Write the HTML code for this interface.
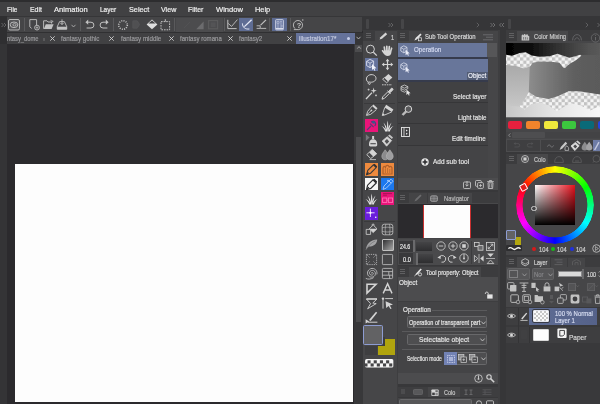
<!DOCTYPE html>
<html><head><meta charset="utf-8"><title>CSP</title><style>
html,body{margin:0;padding:0;background:#2b2a2d;}
body{width:600px;height:404px;overflow:hidden;position:relative;font-family:"Liberation Sans",sans-serif;}
#r{position:absolute;left:-4px;top:-4px;width:608px;height:412px;overflow:hidden;background:#2b2a2d;filter:blur(0.4px);}
#c{position:absolute;left:4px;top:4px;width:600px;height:404px;}
#c div,#c svg,#c span{position:absolute;display:block;}
#c span{white-space:nowrap;transform-origin:0 0;line-height:normal;-webkit-text-stroke:0.2px;}
svg{overflow:visible}
</style></head><body><div id="r"><div id="c">
<div style="left:-4px;top:-4px;width:608px;height:412px;background:#2b2a2d;"></div>
<div style="left:-4px;top:-4px;width:608px;height:6px;background:#2d2d2f;"></div>
<div style="left:-4px;top:2px;width:608px;height:14px;background:#414143;"></div>
<div style="left:-4px;top:16px;width:608px;height:15px;background:#363638;"></div>
<div style="left:-4px;top:16px;width:11px;height:392px;background:#343436;"></div>
<div style="left:-4px;top:16px;width:11px;height:28px;background:#2f2f31;"></div>
<div style="left:7px;top:16.5px;width:355px;height:15.5px;background:#454547;"></div>
<div style="left:7px;top:32px;width:355px;height:1px;background:#303032;"></div>
<div style="left:7px;top:33px;width:355px;height:11px;background:#414143;"></div>
<span style="left:7px;top:4.76px;font-size:8px;color:#f0f0f0;transform:scaleX(0.8077);">File</span>
<span style="left:30px;top:4.76px;font-size:8px;color:#f0f0f0;transform:scaleX(0.8571);">Edit</span>
<span style="left:54px;top:4.76px;font-size:8px;color:#f0f0f0;transform:scaleX(0.9444);">Animation</span>
<span style="left:99.75px;top:4.76px;font-size:8px;color:#f0f0f0;transform:scaleX(0.8125);">Layer</span>
<span style="left:129px;top:4.76px;font-size:8px;color:#f0f0f0;transform:scaleX(0.9091);">Select</span>
<span style="left:160.5px;top:4.76px;font-size:8px;color:#f0f0f0;transform:scaleX(0.8882);">View</span>
<span style="left:188px;top:4.76px;font-size:8px;color:#f0f0f0;transform:scaleX(0.8611);">Filter</span>
<span style="left:216px;top:4.76px;font-size:8px;color:#f0f0f0;transform:scaleX(0.9464);">Window</span>
<span style="left:255px;top:4.76px;font-size:8px;color:#f0f0f0;transform:scaleX(0.9219);">Help</span>
<span style="left:7px;top:33.71px;font-size:7.5px;color:#9a9a9d;transform:scaleX(0.7732);">ntasy_dome</span>
<span style="left:61.2px;top:33.71px;font-size:7.5px;color:#9a9a9d;transform:scaleX(0.8304);">fantasy gothic</span>
<span style="left:120.6px;top:33.71px;font-size:7.5px;color:#9a9a9d;transform:scaleX(0.8333);">fantasy middle</span>
<span style="left:180px;top:33.71px;font-size:7.5px;color:#9a9a9d;transform:scaleX(0.8077);">fantasy romana</span>
<span style="left:239px;top:33.71px;font-size:7.5px;color:#9a9a9d;transform:scaleX(0.8214);">fantasy2</span>
<svg style="left:50.0px;top:35.8px;" width="5" height="5" viewBox="0 0 5 5"><path d="M0.3 0.3L4.7 4.7M4.7 0.3L0.3 4.7" stroke="#cfcfcf" stroke-width="0.9" fill="none"/></svg>
<svg style="left:109.0px;top:35.8px;" width="5" height="5" viewBox="0 0 5 5"><path d="M0.3 0.3L4.7 4.7M4.7 0.3L0.3 4.7" stroke="#cfcfcf" stroke-width="0.9" fill="none"/></svg>
<svg style="left:168.5px;top:35.8px;" width="5" height="5" viewBox="0 0 5 5"><path d="M0.3 0.3L4.7 4.7M4.7 0.3L0.3 4.7" stroke="#cfcfcf" stroke-width="0.9" fill="none"/></svg>
<svg style="left:227.8px;top:35.8px;" width="5" height="5" viewBox="0 0 5 5"><path d="M0.3 0.3L4.7 4.7M4.7 0.3L0.3 4.7" stroke="#cfcfcf" stroke-width="0.9" fill="none"/></svg>
<svg style="left:287.3px;top:35.8px;" width="5" height="5" viewBox="0 0 5 5"><path d="M0.3 0.3L4.7 4.7M4.7 0.3L0.3 4.7" stroke="#cfcfcf" stroke-width="0.9" fill="none"/></svg>
<div style="left:42.5px;top:38px;width:2px;height:2.5px;background:#5a5a5c;"></div>
<div style="left:296px;top:33px;width:59px;height:11px;background:#65729a;"></div>
<span style="left:298.8px;top:33.98px;font-size:7.2px;color:#c4cadf;transform:scaleX(0.8651);">illustration17*</span>
<div style="left:347.3px;top:37.2px;width:3px;height:3px;background:#c9d0ea;border-radius:2px"></div>
<div style="left:355px;top:33px;width:7.5px;height:11px;background:#363638;"></div>
<svg style="left:356px;top:36px;" width="5" height="4" viewBox="0 0 5 4"><path d="M0.5 0.8L2.5 3L4.5 0.8" stroke="#c8c8c8" stroke-width="0.8" fill="none"/></svg>
<div style="left:14.5px;top:164.4px;width:338.6px;height:237.9px;background:#fdfdfd;"></div>
<div style="left:354px;top:44px;width:8.5px;height:364px;background:#38383a;"></div>
<div style="left:355px;top:44.5px;width:7px;height:7px;background:#4c4c4e;"></div>
<div style="left:355.7px;top:136.5px;width:5.6px;height:185px;background:#4c4c4e;"></div>
<svg style="left:356.5px;top:46px;" width="4" height="3" viewBox="0 0 4 3"><path d="M0.3 2.6L2 0.6L3.7 2.6" stroke="#bdbdbd" stroke-width="0.8" fill="none"/></svg>
<div style="left:362.5px;top:30.3px;width:34px;height:377.7px;background:#464648;"></div>
<div style="left:362.5px;top:30.3px;width:34px;height:11.2px;background:#3c3c3e;"></div>
<div style="left:374.5px;top:30.8px;width:22px;height:10.7px;background:#464648;"></div>
<div style="left:396.5px;top:30.3px;width:1.5px;height:377.7px;background:#3e3e40;"></div>
<div style="left:398px;top:30.3px;width:99.5px;height:377.7px;background:#444446;"></div>
<div style="left:497.5px;top:30.3px;width:8.5px;height:377.7px;background:#363638;"></div>
<div style="left:497.5px;top:30.3px;width:2.5px;height:377.7px;background:#3e3e40;"></div>
<div style="left:506px;top:30.3px;width:98px;height:377.7px;background:#464648;"></div>
<svg style="left:0.5px;top:21.5px;" width="6" height="6" viewBox="0 0 6 6"><path d="M0.5 1L2.5 3L0.5 5M3 1L5 3L3 5" stroke="#6e6e70" stroke-width="0.8" fill="none"/></svg>
<svg style="left:8px;top:18.5px;" width="12" height="11.5" viewBox="0 0 12 11.5"><rect x="0.5" y="0.5" width="11" height="10.5" rx="1.5" fill="#565658" stroke="#c2c2c2" stroke-width="0.9"/><ellipse cx="6" cy="5.8" rx="3.8" ry="2.8" fill="none" stroke="#c2c2c2" stroke-width="0.9"/><ellipse cx="6.5" cy="5.8" rx="1.6" ry="1.2" fill="none" stroke="#c2c2c2" stroke-width="0.8"/></svg>
<div style="left:23.5px;top:18px;width:0.8px;height:13px;background:#5a5a5c;"></div>
<svg style="left:29px;top:19px;" width="11" height="11.5" viewBox="0 0 11 11.5"><path d="M0.8 0.6H7.6V6.5M0.8 0.6V7.8L2.6 9.4" fill="none" stroke="#c2c2c2" stroke-width="0.9"/><circle cx="8" cy="8.6" r="2.4" fill="#454547" stroke="#c2c2c2" stroke-width="0.9"/><path d="M6.7 8.6H9.3M8 7.3V9.9" stroke="#c2c2c2" stroke-width="0.7"/></svg>
<svg style="left:43px;top:19.5px;" width="11" height="10" viewBox="0 0 11 10"><path d="M0.6 8.8V0.8H4L5 2H8.6V3.6" fill="none" stroke="#c2c2c2" stroke-width="0.9"/><path d="M0.8 9L2.8 4.2H10.6L8.6 9Z" fill="#c2c2c2"/><path d="M7.5 0.3L10.2 1.4L7.8 2.4" fill="none" stroke="#c2c2c2" stroke-width="0.7"/></svg>
<svg style="left:56px;top:18.5px;" width="12" height="11.5" viewBox="0 0 12 11.5"><path d="M1 8.2L3.6 2.6H8.4L11 8.2Z" fill="none" stroke="#c2c2c2" stroke-width="0.9"/><rect x="0.8" y="8" width="10.4" height="2.8" rx="0.8" fill="#c2c2c2"/><path d="M6 0.4V5.4M4.3 3.8L6 5.6L7.7 3.8" stroke="#c2c2c2" stroke-width="0.9" fill="none"/></svg>
<svg style="left:70.5px;top:23.5px;" width="5" height="4" viewBox="0 0 5 4"><path d="M0.5 0.8L2.5 3L4.5 0.8" stroke="#b8b8b8" stroke-width="0.8" fill="none"/></svg>
<div style="left:80px;top:18px;width:0.8px;height:13px;background:#5a5a5c;"></div>
<svg style="left:84.5px;top:19px;" width="10" height="10.5" viewBox="0 0 10 10.5"><path d="M2.2 3.2H6A2.9 2.9 0 0 1 6 9H1.6" fill="none" stroke="#c2c2c2" stroke-width="1"/><path d="M3.2 0.6L0.4 3.2L3.2 5.8Z" fill="#c2c2c2"/></svg>
<svg style="left:98.5px;top:19px;" width="10" height="10.5" viewBox="0 0 10 10.5"><path d="M7.8 3.2H4A2.9 2.9 0 0 0 4 9H8.4" fill="none" stroke="#c2c2c2" stroke-width="1"/><path d="M6.8 0.6L9.6 3.2L6.8 5.8Z" fill="#c2c2c2"/></svg>
<div style="left:113px;top:18px;width:0.8px;height:13px;background:#5a5a5c;"></div>
<svg style="left:116.5px;top:18.5px;" width="12" height="12" viewBox="0 0 12 12"><circle cx="6" cy="6" r="4.3" fill="none" stroke="#c2c2c2" stroke-width="1.6" stroke-dasharray="1 1.25"/></svg>
<svg style="left:132px;top:20px;" width="9" height="9" viewBox="0 0 9 9"><path d="M0.8 0.8H5.2L7.6 4.5L5.2 8.2H0.8Z" fill="#505052" stroke="#58585a" stroke-width="0.7"/></svg>
<svg style="left:145.5px;top:19px;" width="12" height="10.5" viewBox="0 0 12 10.5"><path d="M0.6 5.4L6 0.4L11.4 5.4L6 10.2Z" fill="#dedede"/><path d="M2.4 4.4L6 1.4L9.6 4.4Z" fill="#454547"/></svg>
<svg style="left:160px;top:18.5px;" width="11" height="12" viewBox="0 0 11 12"><rect x="1" y="2.6" width="8.6" height="8.2" fill="none" stroke="#c2c2c2" stroke-width="1" stroke-dasharray="1.6 1"/><path d="M5.3 0.2V2.6" stroke="#c2c2c2" stroke-width="1"/></svg>
<div style="left:174.4px;top:18px;width:0.8px;height:13px;background:#5a5a5c;"></div>
<div style="left:176px;top:17.5px;width:46.5px;height:14px;background:#4c4c4e;"></div>
<svg style="left:183px;top:21px;" width="8" height="8" viewBox="0 0 8 8"><path d="M1 7L7 1" stroke="#525254" stroke-width="1"/></svg>
<svg style="left:195.5px;top:20.5px;" width="8" height="8.5" viewBox="0 0 8 8.5"><path d="M7.6 0.4V8.2H0.2Z" fill="#6c6c6e"/></svg>
<svg style="left:208px;top:20px;" width="10.5" height="9.5" viewBox="0 0 10.5 9.5"><rect x="0.6" y="0.6" width="9" height="8.2" fill="none" stroke="#5c5c5e" stroke-width="1.1"/><rect x="2.6" y="2.4" width="5" height="4.6" fill="#545456"/></svg>
<div style="left:223.7px;top:18px;width:0.8px;height:13px;background:#5a5a5c;"></div>
<svg style="left:227px;top:19px;" width="11" height="10.5" viewBox="0 0 11 10.5"><path d="M0.8 0.8V9.6H9.6" fill="none" stroke="#c2c2c2" stroke-width="1"/><path d="M1.2 4.4L4.6 7.4L10.4 0.6" fill="none" stroke="#c2c2c2" stroke-width="0.9"/></svg>
<div style="left:238.8px;top:17.5px;width:14.4px;height:13.8px;background:#5f6d94;"></div>
<svg style="left:240.5px;top:18.5px;" width="11.5" height="11.5" viewBox="0 0 11.5 11.5"><path d="M1.4 4.4C1.6 8.6 4.2 10.4 8.4 10" fill="none" stroke="#e6e9f6" stroke-width="1"/><path d="M3.4 7.6L10.6 0.8" stroke="#e6e9f6" stroke-width="1.3"/></svg>
<svg style="left:255.5px;top:19px;" width="11" height="10.5" viewBox="0 0 11 10.5"><path d="M4.6 6.2L10 0.8" stroke="#c2c2c2" stroke-width="1.2"/><path d="M0.6 6.8H4.2V9.4H10.2" fill="none" stroke="#c2c2c2" stroke-width="0.9"/><path d="M0.6 9.4H4" stroke="#c2c2c2" stroke-width="0.9"/></svg>
<div style="left:269.4px;top:18px;width:0.8px;height:13px;background:#5a5a5c;"></div>
<div style="left:272.3px;top:17.5px;width:14.6px;height:13.6px;background:#5d6b92;"></div>
<svg style="left:275px;top:18.5px;" width="9" height="11.5" viewBox="0 0 9 11.5"><rect x="0.6" y="0.6" width="7.8" height="10.3" rx="0.8" fill="#6f7da6" stroke="#cdd2e4" stroke-width="0.9"/><path d="M2 2.4H4V4.4H2ZM5 2.4H7M5 4H7M2 6H4M5 6H7V8H5M2 8H4" stroke="#bcc3da" stroke-width="0.7" fill="none"/><path d="M1 9.6H8" stroke="#d8dcec" stroke-width="1.3"/></svg>
<div style="left:289.8px;top:18px;width:0.8px;height:13px;background:#5a5a5c;"></div>
<svg style="left:292.5px;top:18.5px;" width="11.5" height="11.5" viewBox="0 0 11.5 11.5"><path d="M2 9.6A4.6 4.6 0 1 1 5.8 10.6H0.8" fill="none" stroke="#c2c2c2" stroke-width="0.9"/><text x="5.9" y="8.6" font-size="7.4" font-weight="bold" fill="#c2c2c2" text-anchor="middle" font-family="Liberation Sans">?</text><circle cx="9.8" cy="1" r="0.7" fill="#c2c2c2"/></svg>
<svg style="left:366px;top:32.5px;" width="5" height="5" viewBox="0 0 5 5"><path d="M0 0.5H5M0 2.5H5M0 4.5H5" stroke="#6a6a6c" stroke-width="0.8"/></svg>
<svg style="left:378.5px;top:32.2px;" width="9" height="8" viewBox="0 0 9 8"><path d="M0.6 7.4L1.4 5.2L6.6 0.6L8.2 2.2L3 6.8Z" fill="#d4d4d4"/></svg>
<span style="left:391px;top:32.71px;font-size:7.5px;color:#d0d0d0;transform:scaleX(0.7500);">1</span>
<svg style="left:365px;top:43.5px;" width="13" height="13" viewBox="0 0 13 13"><circle cx="5.4" cy="5.2" r="4" fill="none" stroke="#d4d4d4" stroke-width="1"/><path d="M8.4 8.2L11.8 11.6" stroke="#d4d4d4" stroke-width="1.3"/></svg>
<svg style="left:381px;top:43.5px;" width="13" height="13" viewBox="0 0 13 13"><g stroke="#d4d4d4" stroke-width="1.7" stroke-linecap="round"><path d="M3.9 7.4L3.3 3.2M5.9 7L5.8 2.3M7.9 7L8.3 2.7M9.6 7.6L10.6 4.2M3.6 9.6L1.6 6.8"/></g><path d="M3 7.4C3 5.8 10.4 5.8 10.4 8C10.4 10.6 8.8 12 6.6 12C4.4 12 3 10.4 3 7.4Z" fill="#d4d4d4"/></svg>
<div style="left:365.3px;top:58.099999999999994px;width:12.8px;height:12.8px;background:#65739c;"></div>
<svg style="left:365px;top:58.099999999999994px;" width="13" height="13" viewBox="0 0 13 13"><path d="M1.6 3.4L5 1.4L8.6 3.2V7.6L5 9.6L1.6 7.6Z" fill="none" stroke="#e8ebf7" stroke-width="0.8"/><path d="M1.6 3.4L5 5.2L8.6 3.2M5 5.2V9.6" fill="none" stroke="#e8ebf7" stroke-width="0.7"/><path d="M7 6L11.4 10.2L9.4 10.4L10.4 12.4L9.4 12.8L8.4 10.8L7 12Z" fill="#f2f4fb"/></svg>
<svg style="left:381px;top:58.099999999999994px;" width="13" height="13" viewBox="0 0 13 13"><path d="M6.5 0.8L8.4 3.2H7.1V5.9H9.8V4.6L12.2 6.5L9.8 8.4V7.1H7.1V9.8H8.4L6.5 12.2L4.6 9.8H5.9V7.1H3.2V8.4L0.8 6.5L3.2 4.6V5.9H5.9V3.2H4.6Z" fill="#d4d4d4"/></svg>
<svg style="left:365px;top:72.8px;" width="13" height="13" viewBox="0 0 13 13"><path d="M3.4 9.2C0.8 8 0.6 4.2 3.6 2.4C6.6 0.6 11 2 11 5.4C11 8.4 7 9.8 4.4 9C2.8 8.6 2.6 11 4.4 11.4C5.6 11.6 5.6 10 4.6 10" fill="none" stroke="#d4d4d4" stroke-width="1"/></svg>
<svg style="left:381px;top:72.8px;" width="13" height="13" viewBox="0 0 13 13"><path d="M1.6 6.2L7.4 1L11.4 4.6L5.6 9.8Z" fill="#d4d4d4"/><path d="M1.6 6.2L3.4 4.6L7.4 8.2L5.6 9.8Z" fill="#4a4a4c" stroke="#d4d4d4" stroke-width="0.8"/><path d="M1 11.8H11" stroke="#d4d4d4" stroke-width="0.9" stroke-dasharray="1.6 0.8"/></svg>
<svg style="left:365px;top:87.3px;" width="13" height="13" viewBox="0 0 13 13"><path d="M1 12L7 5.6" stroke="#d4d4d4" stroke-width="1.3"/><path d="M8.6 0.6L9.3 3L11.8 3.6L9.4 4.4L8.8 6.8L8 4.4L5.6 3.8L8 3Z" fill="#d4d4d4"/><path d="M3.6 1.6V3.6M2.6 2.6H4.6M11 7.4V9.4M10 8.4H12" stroke="#d4d4d4" stroke-width="0.7"/></svg>
<svg style="left:381px;top:87.3px;" width="13" height="13" viewBox="0 0 13 13"><path d="M1 12.2L1.8 9.8L7 4.6L8.6 6.2L3.4 11.4Z" fill="none" stroke="#d4d4d4" stroke-width="1"/><path d="M6.6 3.6L9.6 6.6M7.8 4.4L10.2 1.4C11 0.6 12.6 2 11.8 3L9 5.6" fill="#d4d4d4" stroke="#d4d4d4" stroke-width="1"/></svg>
<div style="left:364px;top:102.5px;width:31px;height:0.8px;background:#3a3a3c;"></div>
<svg style="left:365px;top:104.1px;" width="13" height="13" viewBox="0 0 13 13"><path d="M8.4 0.6L12.5 4.3L11.2 5.8L7 2.1Z" fill="#d4d4d4"/><path d="M7 2.1L2.6 7.4L1.5 11.4L5.6 10.4L11.2 5.8" fill="none" stroke="#d4d4d4" stroke-width="0.9"/><path d="M1.6 11.2L6.2 6.6" stroke="#d4d4d4" stroke-width="0.8"/><circle cx="6.4" cy="6.4" r="0.9" fill="#d4d4d4"/></svg>
<svg style="left:381px;top:104.1px;" width="13" height="13" viewBox="0 0 13 13"><path d="M5.2 0.8L12.4 5.4L10.8 8.1L3.6 3.5Z" fill="#d4d4d4"/><path d="M3.8 3.4L1.8 9.4L1.3 11.5L3.4 11.1L10.8 7.9" fill="none" stroke="#d4d4d4" stroke-width="0.9"/><path d="M1.3 11.5L2 9L3.8 10.8Z" fill="#d4d4d4"/></svg>
<div style="left:365.3px;top:118.8px;width:12.8px;height:12.8px;background:#ea1479;"></div>
<svg style="left:365px;top:118.8px;" width="13" height="13" viewBox="0 0 13 13"><path d="M2 11L6 7M5 4.6L8.6 8.2M6.2 3.4C7 2 9 2 10 3.2C11 4.4 10.8 6 9.6 6.8" fill="none" stroke="#5a3a78" stroke-width="1.2"/><circle cx="8.6" cy="3.2" r="1.5" fill="#3a5a8a"/></svg>
<svg style="left:381px;top:118.8px;" width="13" height="13" viewBox="0 0 13 13"><path d="M6.4 12.4C5.9 8 6 5 6.6 1.6C7.4 5 7.4 8 7.2 12.4ZM5.2 12.4C4.6 8.8 3.8 6 2.4 3.4C4.6 5.4 5.9 8.4 6.3 12.4ZM7.8 12.4C8.4 8.8 9.2 6 10.6 3.4C8.4 5.4 7.1 8.4 6.7 12.4ZM4.2 12.4C3.5 10.2 2.3 8.4 0.4 7C2.9 7.8 4.6 9.6 5.4 12.4ZM8.8 12.4C9.5 10.2 10.7 8.4 12.6 7C10.1 7.8 8.4 9.6 7.6 12.4Z" fill="#e6e6e6"/></svg>
<svg style="left:365px;top:133.5px;" width="13" height="13" viewBox="0 0 13 13"><path d="M0.8 0.2L4.6 3.6L0.8 7Z" fill="#77777a"/><rect x="7.1" y="2" width="2" height="3" fill="#d4d4d4"/><path d="M4 10C4 7 5.6 5.2 8.1 5.2C10.6 5.2 12.2 7 12.2 10V11C12.2 12 11.6 12.4 10.8 12.4H5.4C4.6 12.4 4 12 4 11Z" fill="#d4d4d4"/><path d="M5.4 9.7H10.8" stroke="#4a4a4c" stroke-width="1.1"/></svg>
<svg style="left:381px;top:133.5px;" width="13" height="13" viewBox="0 0 13 13"><path d="M1.2 7L6.2 2.8L10.6 6.6L5.6 12.2Z" fill="#d4d4d4" stroke="#d4d4d4" stroke-width="0.8" stroke-linejoin="round"/><path d="M7 1.8L8.6 0.6L12 3.6L10.9 5Z" fill="#c4c4c4"/><path d="M3.6 7.2L6 5L8.2 7.4L5.8 9.9Z" fill="#505052"/></svg>
<svg style="left:365px;top:148.2px;" width="13" height="13" viewBox="0 0 13 13"><path d="M1.8 6.6L7.3 1.4L11.7 5.8L5.7 10.6Z" fill="none" stroke="#d4d4d4" stroke-width="0.9" stroke-linejoin="round"/><path d="M4.2 4.4L7.3 1.4L11.7 5.8L8.2 8.6Z" fill="#d4d4d4"/><path d="M4.6 11.6H11" stroke="#d4d4d4" stroke-width="0.8"/></svg>
<svg style="left:381px;top:148.2px;" width="13" height="13" viewBox="0 0 13 13"><path d="M4.2 1.8C6.2 4.6 7.6 6.2 7.6 8.4C7.6 10.4 6 11.8 4.2 11.8C2.4 11.8 0.8 10.4 0.8 8.4C0.8 6.2 2.2 4.6 4.2 1.8Z" fill="#8a8a8c" stroke="#b4b4b4" stroke-width="0.6"/><path d="M8.8 1.8C10.8 4.6 12.2 6.2 12.2 8.4C12.2 10.4 10.6 11.8 8.8 11.8C7 11.8 5.4 10.4 5.4 8.4C5.4 6.2 6.8 4.6 8.8 1.8Z" fill="#9e9ea0" stroke="#b8b8b8" stroke-width="0.6"/></svg>
<div style="left:365.3px;top:162.9px;width:12.8px;height:12.8px;background:#ee8a3e;"></div>
<svg style="left:365px;top:162.9px;" width="13" height="13" viewBox="0 0 13 13"><path d="M1.6 11.6L2.8 7.4L8.4 1.8L11.2 4.6L5.6 10.2Z" fill="none" stroke="#3a3a3c" stroke-width="1.1"/><path d="M8.4 1.8L9.6 0.8L12.2 3.4L11.2 4.6Z" fill="#2e2e30"/><path d="M1.6 11.6L3.4 9.4" stroke="#2e2e30" stroke-width="1.2"/></svg>
<div style="left:381.3px;top:162.9px;width:12.8px;height:12.8px;background:#ee8a3e;"></div>
<svg style="left:381px;top:162.9px;" width="13" height="13" viewBox="0 0 13 13"><path d="M2 11V5.6C2 3.6 3.4 2.6 4.4 4.4C4.8 2 7.4 1.4 8.2 4C9.8 2.6 11.4 4 11 6V11Z" fill="none" stroke="#b0602a" stroke-width="1.2"/><path d="M4.4 6V10M6.6 5V10M8.8 6V10" stroke="#b86a30" stroke-width="0.9"/></svg>
<div style="left:365.3px;top:177.6px;width:12.8px;height:12.8px;background:#f6f6f6;"></div>
<svg style="left:365px;top:177.6px;" width="13" height="13" viewBox="0 0 13 13"><path d="M1.6 11.6L2.6 7.2L8 1.8L11.2 5L5.8 10.4Z" fill="none" stroke="#2c2c2e" stroke-width="1.2"/><path d="M8 1.8L9.4 0.8L12.2 3.6L11.2 5Z" fill="#2c2c2e"/><path d="M1.6 11.6L3.8 9.2" stroke="#2c2c2e" stroke-width="1.2"/></svg>
<div style="left:381.3px;top:177.6px;width:12.8px;height:12.8px;background:#1c78ee;"></div>
<svg style="left:381px;top:177.6px;" width="13" height="13" viewBox="0 0 13 13"><path d="M2 11.4L3 8L8 3L10.2 5.2L5.2 10.2Z" fill="none" stroke="#9cc4f8" stroke-width="1"/><path d="M8 3L10 1.2L12 3.2L10.2 5.2" fill="none" stroke="#9cc4f8" stroke-width="1"/><circle cx="7" cy="2.8" r="1" fill="#9cc4f8"/></svg>
<svg style="left:365px;top:192.3px;" width="13" height="13" viewBox="0 0 13 13"><path d="M6.4 12.4C5.9 8 6 5 6.6 1.6C7.4 5 7.4 8 7.2 12.4ZM5.2 12.4C4.6 8.8 3.8 6 2.4 3.4C4.6 5.4 5.9 8.4 6.3 12.4ZM7.8 12.4C8.4 8.8 9.2 6 10.6 3.4C8.4 5.4 7.1 8.4 6.7 12.4ZM4.2 12.4C3.5 10.2 2.3 8.4 0.4 7C2.9 7.8 4.6 9.6 5.4 12.4ZM8.8 12.4C9.5 10.2 10.7 8.4 12.6 7C10.1 7.8 8.4 9.6 7.6 12.4Z" fill="#e6e6e6"/></svg>
<div style="left:381.3px;top:192.3px;width:12.8px;height:12.8px;background:#ea1479;"></div>
<svg style="left:381px;top:192.3px;" width="13" height="13" viewBox="0 0 13 13"><path d="M2 1.6H11M2 3.2H6" stroke="#b01058" stroke-width="1"/><rect x="1.6" y="6" width="4.2" height="4.4" fill="none" stroke="#ff70b4" stroke-width="0.9"/><rect x="7.4" y="6" width="4.2" height="4.4" fill="none" stroke="#ff70b4" stroke-width="0.9"/><path d="M5.8 8.2H7.4" stroke="#ff70b4" stroke-width="0.8"/></svg>
<div style="left:365.3px;top:207.0px;width:12.8px;height:12.8px;background:#6a1edc;"></div>
<svg style="left:365px;top:207.0px;" width="13" height="13" viewBox="0 0 13 13"><path d="M5.4 1.6V10M1.4 5.8H9.6" stroke="#f4ecff" stroke-width="0.9"/><circle cx="5.4" cy="5.8" r="1.1" fill="#ffffff"/><rect x="10" y="9.6" width="1.4" height="1.4" fill="#e8dcff"/></svg>
<div style="left:364px;top:221.3px;width:31px;height:0.8px;background:#3a3a3c;"></div>
<svg style="left:365px;top:223.2px;" width="13" height="13" viewBox="0 0 13 13"><path d="M4.2 5.8L8.2 2L12 5.8L8.2 9.6Z" fill="none" stroke="#d4d4d4" stroke-width="0.8"/><path d="M4.2 5.8H12L8.2 9.6Z" fill="#d4d4d4"/><path d="M1.2 6.4H5.6V11.4H1.2Z" fill="#464648" stroke="#d4d4d4" stroke-width="0.8"/><path d="M6.8 2.4C6.8 0.6 9.4 0.6 9.4 2.4" fill="none" stroke="#d4d4d4" stroke-width="0.8"/></svg>
<svg style="left:381px;top:223.2px;" width="13" height="13" viewBox="0 0 13 13"><rect x="1.2" y="1.2" width="10.6" height="10.6" rx="2" fill="none" stroke="#c4c4c4" stroke-width="0.8"/><path d="M1.2 4.8C4 4 9 4 11.8 4.8M1.2 8.4C4 9.2 9 9.2 11.8 8.4M4.8 1.2C4 4 4 9 4.8 11.8M8.4 1.2C9.2 4 9.2 9 8.4 11.8" fill="none" stroke="#c4c4c4" stroke-width="0.6"/></svg>
<svg style="left:365px;top:237.9px;" width="13" height="13" viewBox="0 0 13 13"><path d="M0.8 12C1.4 6 5 1.8 12.2 1.4C12 5.4 9.4 8.2 4 8.6C2.8 9.4 2 10.4 0.8 12Z" fill="#a4a4a6"/><path d="M0.8 12C3 8 6 5 10.4 2.8" stroke="#6a6a6c" stroke-width="0.6" fill="none"/></svg>
<div style="left:381.8px;top:238.70000000000002px;width:10.6px;height:10.6px;border:0.8px solid #c0c0c0;border-radius:1px;background:linear-gradient(135deg,#3c3c3e 10%,#a8a8a8)"></div>
<svg style="left:365px;top:252.60000000000002px;" width="13" height="13" viewBox="0 0 13 13"><rect x="1.4" y="1.4" width="10.2" height="10.2" fill="none" stroke="#b0b0b2" stroke-width="0.9" stroke-dasharray="1.3 0.9"/><path d="M2.4 2.4L5 5M10.6 2.4L8 5M2.4 10.6L5 8M10.6 10.6L8 8" stroke="#b0b0b2" stroke-width="0.9" stroke-dasharray="1 0.7"/></svg>
<svg style="left:381px;top:252.60000000000002px;" width="13" height="13" viewBox="0 0 13 13"><rect x="1.4" y="1.4" width="10.2" height="10.2" rx="0.8" fill="none" stroke="#c4c4c4" stroke-width="0.8"/></svg>
<svg style="left:365px;top:267.3px;" width="13" height="13" viewBox="0 0 13 13"><path d="M6.6 6.4C6 5.4 7.6 4.8 8.2 6.2C8.8 7.8 6.6 8.8 5.2 7.6C3.6 6.2 4.8 3.4 7.4 3.4C10 3.4 11.2 6.4 9.8 8.6C8.2 10.8 4.4 10.6 3 8.2C1.6 5.6 3.2 1.8 7 1.4C10.6 1.2 12.6 4.6 11.8 7.4" fill="none" stroke="#b4b4b6" stroke-width="1"/><path d="M0.8 11.4C3 12.6 6.4 12.2 8.6 10.6" fill="none" stroke="#b4b4b6" stroke-width="1"/></svg>
<svg style="left:381px;top:267.3px;" width="13" height="13" viewBox="0 0 13 13"><rect x="1.4" y="1.4" width="10.2" height="10.2" rx="1" fill="none" stroke="#c4c4c4" stroke-width="0.8"/><path d="M1.4 4.6H11.6M1.4 8.2H11.6M7.8 4.6V8.2M8.6 8.2V11.6" stroke="#c4c4c4" stroke-width="0.8"/></svg>
<svg style="left:365px;top:282.0px;" width="13" height="13" viewBox="0 0 13 13"><path d="M2 2.2H11L2 11Z" fill="none" stroke="#d4d4d4" stroke-width="1.6" stroke-linejoin="miter"/></svg>
<svg style="left:381px;top:282.0px;" width="13" height="13" viewBox="0 0 13 13"><path d="M2.2 11.4L6.6 1.6L11 11.4M3.8 8H9.4" fill="none" stroke="#d4d4d4" stroke-width="1.4"/></svg>
<svg style="left:365px;top:296.7px;" width="13" height="13" viewBox="0 0 13 13"><path d="M1.4 2H12L7.8 6L11.2 6.6L2.6 11.8L5.6 6.6Z" fill="none" stroke="#d4d4d4" stroke-width="0.9" stroke-linejoin="round"/><path d="M1.4 2H12" stroke="#d4d4d4" stroke-width="1.3"/></svg>
<svg style="left:381px;top:296.7px;" width="13" height="13" viewBox="0 0 13 13"><circle cx="2" cy="1.6" r="1.2" fill="#d4d4d4"/><path d="M2 1.6V11.6M4.2 1.6H12" stroke="#d4d4d4" stroke-width="0.9"/><path d="M4.6 4.2L12 7.6L8.8 8.4L10.6 11.4L9.4 12L7.6 9L5.2 11Z" fill="#d4d4d4"/></svg>
<svg style="left:365px;top:311.4px;" width="13" height="13" viewBox="0 0 13 13"><path d="M4 9L11 0.8L12.2 1.8L5.6 10Z" fill="#d4d4d4"/><path d="M0.6 8.2L4.2 10.4L0.6 12.4Z" fill="#d4d4d4"/><path d="M3 11.2H12.4" stroke="#d4d4d4" stroke-width="1"/></svg>
<div style="left:378px;top:338.6px;width:17px;height:16.6px;background:#b0a40e;"></div>
<div style="left:376.5px;top:337px;width:8px;height:9px;background:#3c3c3e;"></div>
<div style="left:363px;top:325.2px;width:20px;height:19.4px;background:#626264;border:1px solid #8d9cd2;box-sizing:border-box;border-radius:1.5px"></div>
<div style="left:365px;top:346px;width:12px;height:9px;background:#3e3e40;"></div>
<svg style="left:364.7px;top:359px;" width="28.6" height="8.7" viewBox="0 0 28.6 8.7"><defs><clipPath id="cc"><rect width="28.6" height="8.7" rx="1.8"/></clipPath></defs><g clip-path="url(#cc)"><rect width="28.6" height="8.7" fill="#f6f6f6"/><rect x="2.5" y="1.3" width="3.1" height="3.1" fill="#454547"/><rect x="8.7" y="1.3" width="3.1" height="3.1" fill="#454547"/><rect x="14.9" y="1.3" width="3.1" height="3.1" fill="#454547"/><rect x="21.1" y="1.3" width="3.1" height="3.1" fill="#454547"/><rect x="-0.6" y="4.4" width="3.1" height="3.1" fill="#454547"/><rect x="5.6" y="4.4" width="3.1" height="3.1" fill="#454547"/><rect x="11.8" y="4.4" width="3.1" height="3.1" fill="#454547"/><rect x="18.0" y="4.4" width="3.1" height="3.1" fill="#454547"/><rect x="24.2" y="4.4" width="3.1" height="3.1" fill="#454547"/></g></svg>
<div style="left:400.5px;top:18.5px;width:3px;height:10px;background:#464648;border-radius:1px"></div>
<div style="left:366px;top:18.5px;width:3px;height:10px;background:#464648;border-radius:1px"></div>
<svg style="left:388px;top:21.5px;" width="6" height="6" viewBox="0 0 6 6"><path d="M0.5 1L2.5 3L0.5 5M3 1L5 3L3 5" stroke="#6e6e70" stroke-width="0.8" fill="none"/></svg>
<svg style="left:475.5px;top:21.5px;" width="4" height="6" viewBox="0 0 4 6"><path d="M0.8 0.8L3 3L0.8 5.2" stroke="#6a6a6c" stroke-width="0.8" fill="none"/></svg>
<svg style="left:489.5px;top:21.5px;" width="6" height="6" viewBox="0 0 6 6"><path d="M0.5 1L2.5 3L0.5 5M3 1L5 3L3 5" stroke="#7a7a7c" stroke-width="0.8" fill="none"/></svg>
<svg style="left:498.5px;top:21.5px;" width="6" height="6" viewBox="0 0 6 6"><path d="M2.5 1L0.5 3L2.5 5M5 1L3 3L5 5" stroke="#7a7a7c" stroke-width="0.8" fill="none"/></svg>
<div style="left:508px;top:18.5px;width:3px;height:10px;background:#464648;border-radius:1px"></div>
<svg style="left:584.5px;top:21.5px;" width="4" height="6" viewBox="0 0 4 6"><path d="M0.8 0.8L3 3L0.8 5.2" stroke="#6a6a6c" stroke-width="0.8" fill="none"/></svg>
<svg style="left:597px;top:21.5px;" width="6" height="6" viewBox="0 0 6 6"><path d="M0.5 1L2.5 3L0.5 5M3 1L5 3L3 5" stroke="#6e6e70" stroke-width="0.8" fill="none"/></svg>
<div style="left:398px;top:30.3px;width:99.5px;height:11.2px;background:#3c3c3e;"></div>
<div style="left:409px;top:30.8px;width:88.5px;height:10.7px;background:#454547;"></div>
<svg style="left:400px;top:32.8px;" width="5" height="5" viewBox="0 0 5 5"><path d="M0 0.5H5M0 2.5H5M0 4.5H5" stroke="#6a6a6c" stroke-width="0.8"/></svg>
<svg style="left:413.5px;top:33px;" width="8" height="8" viewBox="0 0 8 8"><path d="M0.4 7.6L1.6 5L6.4 0.6L7.6 1.8L2.8 6.4Z" fill="#e6e6e6"/><rect x="4.6" y="4.8" width="3" height="3" fill="none" stroke="#e6e6e6" stroke-width="0.7"/></svg>
<span style="left:425px;top:31.98px;font-size:7.2px;color:#dadada;transform:scaleX(0.8230);">Sub Tool Operation</span>
<svg style="left:483px;top:33.5px;" width="10" height="7" viewBox="0 0 10 7"><path d="M0 0.8H10M3 3.2H10M0 5.8H10" stroke="#6e6e70" stroke-width="0.9"/></svg>
<div style="left:487.5px;top:43px;width:10px;height:135.2px;background:#464648;"></div>
<div style="left:398px;top:43px;width:88.8px;height:14px;background:#68769a;"></div>
<div style="left:486.8px;top:43px;width:10.7px;height:14px;background:#565658;"></div>
<svg style="left:399.5px;top:44.5px;" width="11" height="11" viewBox="0 0 11 11"><path d="M0.8 2.6L3.8 0.8L7 2.4V6L3.8 7.8L0.8 6Z" fill="none" stroke="#e8ebf7" stroke-width="0.7"/><path d="M0.8 2.6L3.8 4.2L7 2.4M3.8 4.2V7.8" fill="none" stroke="#e8ebf7" stroke-width="0.6"/><path d="M5.6 4.6L9.8 8.4L8 8.6L8.9 10.4L8 10.8L7.1 9L5.6 10.2Z" fill="#e8ebf7"/></svg>
<span style="left:413.8px;top:45.36px;font-size:8px;color:#d4daf0;transform:scaleX(0.7771);">Operation</span>
<div style="left:398px;top:57px;width:89.5px;height:2px;background:#363b4c;"></div>
<div style="left:398px;top:80.3px;width:89.5px;height:1.3px;background:#363b4c;"></div>
<div style="left:398px;top:59px;width:89.5px;height:21.3px;background:#68769a;"></div>
<svg style="left:399.5px;top:61.5px;" width="11" height="11" viewBox="0 0 11 11"><path d="M0.8 2.6L3.8 0.8L7 2.4V6L3.8 7.8L0.8 6Z" fill="none" stroke="#e8ebf7" stroke-width="0.7"/><path d="M0.8 2.6L3.8 4.2L7 2.4M3.8 4.2V7.8" fill="none" stroke="#e8ebf7" stroke-width="0.6"/><path d="M5.6 4.6L9.8 8.4L8 8.6L8.9 10.4L8 10.8L7.1 9L5.6 10.2Z" fill="#e8ebf7"/></svg>
<div style="left:467px;top:71.5px;width:20.5px;height:8.8px;background:#535d75;"></div>
<span style="left:468.3px;top:71.06px;font-size:8px;color:#eef0f8;transform:scaleX(0.7913);">Object</span>
<div style="left:398px;top:81.6px;width:89.5px;height:20.4px;background:#414143;"></div>
<div style="left:398px;top:102.0px;width:89.5px;height:1px;background:#363638;"></div>
<div style="left:398px;top:103px;width:89.5px;height:20.4px;background:#414143;"></div>
<div style="left:398px;top:123.4px;width:89.5px;height:1px;background:#363638;"></div>
<div style="left:398px;top:124.4px;width:89.5px;height:20.4px;background:#414143;"></div>
<div style="left:398px;top:144.8px;width:89.5px;height:1px;background:#363638;"></div>
<span style="left:453px;top:91.56px;font-size:8px;color:#e6e6e6;transform:scaleX(0.7976);">Select layer</span>
<span style="left:458px;top:112.76px;font-size:8px;color:#e6e6e6;transform:scaleX(0.7703);">Light table</span>
<span style="left:452.4px;top:134.06px;font-size:8px;color:#e6e6e6;transform:scaleX(0.7750);">Edit timeline</span>
<svg style="left:400px;top:83.5px;" width="12" height="12" viewBox="0 0 12 12"><path d="M1 2.6L4.4 1L7.8 2.6L4.4 4.2Z" fill="none" stroke="#e6e6e6" stroke-width="0.7"/><path d="M1 4.6L4.4 6.2L7.8 4.6M1 6.6L4.4 8.2L6 7.4M1 2.6V6.6M7.8 2.6V4.6" fill="none" stroke="#e6e6e6" stroke-width="0.7"/><path d="M6.4 5.4L10.6 9.2L8.8 9.4L9.7 11.2L8.8 11.6L7.9 9.8L6.4 11Z" fill="#e6e6e6"/></svg>
<svg style="left:400.5px;top:104.5px;" width="11" height="12" viewBox="0 0 11 12"><circle cx="7.4" cy="4.1" r="3.3" fill="#5a5a5c" stroke="#e6e6e6" stroke-width="0.9"/><path d="M4.4 5.6L6 7.2L2.4 10.8L0.6 9.2Z" fill="#bcbcbc"/></svg>
<svg style="left:401px;top:127px;" width="9" height="10" viewBox="0 0 9 10"><rect x="0.5" y="0.5" width="8" height="9" fill="none" stroke="#e6e6e6" stroke-width="0.9"/><path d="M3 0.5V9.5" stroke="#e6e6e6" stroke-width="0.8"/><path d="M5 2.4L6.8 3.4L5 4.4ZM5 5.8L6.8 6.8L5 7.8Z" fill="#e6e6e6"/></svg>
<svg style="left:421px;top:158px;" width="8" height="8" viewBox="0 0 8 8"><circle cx="4" cy="4" r="3.7" fill="#e6e6e6"/><path d="M1.6 4H6.4M4 1.6V6.4" stroke="#2a2a2c" stroke-width="1.5"/></svg>
<span style="left:432.6px;top:156.76px;font-size:8px;color:#e6e6e6;transform:scaleX(0.8114);">Add sub tool</span>
<div style="left:398px;top:178.2px;width:99.5px;height:11.4px;background:#4c4c4e;"></div>
<svg style="left:462.5px;top:180.5px;" width="8" height="8" viewBox="0 0 8 8"><rect x="0.5" y="1" width="7" height="6.5" rx="1" fill="none" stroke="#d0d0d0" stroke-width="0.8"/><path d="M4 0V5M2.4 3.6L4 5.2L5.6 3.6" fill="none" stroke="#d0d0d0" stroke-width="0.8"/></svg>
<svg style="left:474.5px;top:180px;" width="9" height="9" viewBox="0 0 9 9"><rect x="0.5" y="0.5" width="5.8" height="5.8" rx="1" fill="none" stroke="#d0d0d0" stroke-width="0.8"/><rect x="2.6" y="2.6" width="5.8" height="5.8" rx="1" fill="#4c4c4e" stroke="#d0d0d0" stroke-width="0.8"/><path d="M4 5.5H7M5.5 4V7" stroke="#d0d0d0" stroke-width="0.7"/></svg>
<svg style="left:487px;top:180px;" width="7" height="9" viewBox="0 0 7 9"><path d="M0.2 1.6H6.8M2.4 1.6V0.5H4.6V1.6" fill="none" stroke="#d0d0d0" stroke-width="0.8"/><path d="M1 2.8H6L5.6 8.5H1.4Z" fill="none" stroke="#d0d0d0" stroke-width="0.8"/><path d="M2.6 3.6V7.6M4.4 3.6V7.6" stroke="#d0d0d0" stroke-width="0.6"/></svg>
<div style="left:398px;top:189.6px;width:99.5px;height:2.4px;background:#38383a;"></div>
<div style="left:398px;top:192px;width:99.5px;height:11px;background:#3c3c3e;"></div>
<svg style="left:400px;top:195px;" width="5" height="5" viewBox="0 0 5 5"><path d="M0 0.5H5M0 2.5H5M0 4.5H5" stroke="#6a6a6c" stroke-width="0.8"/></svg>
<div style="left:409px;top:192.5px;width:17.5px;height:10.5px;background:#444446;"></div>
<svg style="left:413.5px;top:194px;" width="8" height="8" viewBox="0 0 8 8"><path d="M0.4 7.6L1.6 5L6.4 0.6L7.6 1.8L2.8 6.4Z" fill="#6c6c6e"/></svg>
<div style="left:427.5px;top:192.5px;width:44px;height:11px;background:#464648;"></div>
<svg style="left:430px;top:194.5px;" width="8" height="7" viewBox="0 0 8 7"><rect x="0.5" y="0.8" width="7" height="5.6" rx="1.6" fill="#6a6a6c" stroke="#a4a4a6" stroke-width="0.8"/><path d="M0.5 3.6H7.5M4 0.8V6.4" stroke="#9a9a9c" stroke-width="0.5"/></svg>
<span style="left:443.5px;top:193.81px;font-size:7.5px;color:#b8b8b8;transform:scaleX(0.7750);">Navigator</span>
<div style="left:398px;top:202.6px;width:99.5px;height:1.8px;background:#48484a;"></div>
<div style="left:398px;top:204.3px;width:99.5px;height:34px;background:#2b2a2d;"></div>
<div style="left:423px;top:204.8px;width:48px;height:33.5px;background:#fdfdfd;border-left:0.7px solid #c83030;border-right:0.7px solid #c83030;box-sizing:border-box"></div>
<div style="left:398px;top:238.5px;width:99.5px;height:26.3px;background:#4a4a4c;"></div>
<div style="left:399.3px;top:240.5px;width:13.5px;height:11px;background:#39393b;"></div>
<div style="left:399.3px;top:253px;width:13.5px;height:11px;background:#39393b;"></div>
<span style="left:400.3px;top:242.21px;font-size:7.5px;color:#e8e8e8;transform:scaleX(0.7000);">24.6</span>
<span style="left:402.5px;top:254.51px;font-size:7.5px;color:#e8e8e8;transform:scaleX(0.7500);">0.0</span>
<div style="left:413.3px;top:240px;width:2px;height:12px;background:#6a6a6c;"></div>
<div style="left:415.5px;top:252.5px;width:2px;height:12px;background:#6a6a6c;"></div>
<div style="left:415.8px;top:241.5px;width:16.5px;height:9px;background:linear-gradient(180deg,#444446,#2e2e30)"></div>
<div style="left:418px;top:254px;width:14.5px;height:9px;background:linear-gradient(180deg,#444446,#2e2e30)"></div>
<svg style="left:436px;top:241px;" width="10" height="10" viewBox="0 0 10 10"><circle cx="5" cy="5" r="4.2" fill="none" stroke="#d2d2d2" stroke-width="0.8"/><path d="M2.8 5H7.2" stroke="#d2d2d2" stroke-width="0.9"/></svg>
<svg style="left:447.5px;top:241px;" width="10" height="10" viewBox="0 0 10 10"><circle cx="5" cy="5" r="4.2" fill="none" stroke="#d2d2d2" stroke-width="0.8"/><path d="M2.8 5H7.2M5 2.8V7.2" stroke="#d2d2d2" stroke-width="0.9"/></svg>
<svg style="left:459px;top:241px;" width="10" height="10" viewBox="0 0 10 10"><circle cx="5" cy="5" r="4.2" fill="none" stroke="#d2d2d2" stroke-width="0.8"/><rect x="3.2" y="3.2" width="3.6" height="3.6" fill="#d2d2d2"/></svg>
<svg style="left:436.5px;top:253.5px;" width="9" height="9" viewBox="0 0 9 9"><path d="M2.4 3.2A3.4 3.4 0 1 1 4.5 8.2" fill="none" stroke="#d2d2d2" stroke-width="0.9"/><path d="M0.4 3.4L3.6 1.4L3.6 5Z" fill="#d2d2d2"/></svg>
<svg style="left:448px;top:253.5px;" width="9" height="9" viewBox="0 0 9 9"><path d="M6.6 3.2A3.4 3.4 0 1 0 4.5 8.2" fill="none" stroke="#d2d2d2" stroke-width="0.9"/><path d="M8.6 3.4L5.4 1.4L5.4 5Z" fill="#d2d2d2"/></svg>
<svg style="left:459px;top:253px;" width="10" height="10" viewBox="0 0 10 10"><circle cx="5" cy="5" r="4.2" fill="none" stroke="#d2d2d2" stroke-width="0.8"/><path d="M5 1.2V5" stroke="#d2d2d2" stroke-width="0.9"/><circle cx="5" cy="5.4" r="1" fill="#d2d2d2"/></svg>
<div style="left:471px;top:240.5px;width:0.8px;height:23.5px;background:#3c3c3e;"></div>
<svg style="left:473.5px;top:241.5px;" width="10" height="9" viewBox="0 0 10 9"><rect x="0.5" y="0.5" width="4.6" height="4" fill="none" stroke="#d2d2d2" stroke-width="0.8"/><rect x="4" y="3.6" width="5" height="4.6" fill="#6a6a6c" stroke="#d2d2d2" stroke-width="0.8"/></svg>
<svg style="left:485.5px;top:241.5px;" width="9" height="9" viewBox="0 0 9 9"><rect x="0.5" y="0.5" width="8" height="8" fill="none" stroke="#d2d2d2" stroke-width="0.8"/><path d="M2.2 6.8L6.8 2.2M4.6 2.2H6.8V4.4M2.2 4.6V6.8H4.4" fill="none" stroke="#d2d2d2" stroke-width="0.8"/></svg>
<svg style="left:473.5px;top:253.5px;" width="10" height="9" viewBox="0 0 10 9"><path d="M0.4 1.4L3.8 4.5L0.4 7.6Z" fill="none" stroke="#d2d2d2" stroke-width="0.8"/><path d="M9.6 1.4L6.2 4.5L9.6 7.6Z" fill="#d2d2d2"/><path d="M5 0V9" stroke="#d2d2d2" stroke-width="0.7"/></svg>
<svg style="left:485.5px;top:252.5px;" width="9" height="11" viewBox="0 0 9 11"><path d="M1.2 0.4H7.8L4.5 4Z" fill="#d2d2d2"/><path d="M1.2 10.6H7.8L4.5 7Z" fill="none" stroke="#d2d2d2" stroke-width="0.8"/><path d="M0 5.5H9" stroke="#d2d2d2" stroke-width="0.7"/></svg>
<div style="left:398px;top:264.8px;width:99.5px;height:1.2px;background:#38383a;"></div>
<div style="left:398px;top:266px;width:99.5px;height:11px;background:#3c3c3e;"></div>
<svg style="left:400px;top:269px;" width="5" height="5" viewBox="0 0 5 5"><path d="M0 0.5H5M0 2.5H5M0 4.5H5" stroke="#6a6a6c" stroke-width="0.8"/></svg>
<div style="left:409px;top:266.5px;width:71.5px;height:10.5px;background:#464648;"></div>
<svg style="left:413.5px;top:268px;" width="8.5" height="8.5" viewBox="0 0 8.5 8.5"><path d="M1.4 6.2L6.6 0.6L7.8 1.6L2.8 7Z" fill="#e6e6e6"/><circle cx="6" cy="6.4" r="1.6" fill="none" stroke="#e6e6e6" stroke-width="0.8"/><path d="M0.4 8L2 6.6" stroke="#e6e6e6" stroke-width="0.8"/></svg>
<span style="left:425.7px;top:267.71px;font-size:7.5px;color:#e6e6e6;transform:scaleX(0.7580);">Tool property: Object</span>
<div style="left:398px;top:277px;width:99.5px;height:23.5px;background:#4c4c4e;"></div>
<span style="left:399px;top:277.76px;font-size:8px;color:#e6e6e6;transform:scaleX(0.7913);">Object</span>
<svg style="left:484.5px;top:290.5px;" width="8" height="8" viewBox="0 0 8 8"><rect x="2.2" y="3.4" width="5.4" height="4.2" fill="#e6e6e6"/><path d="M3.2 3.4V2A1.5 1.5 0 0 0 0.4 2V3" fill="none" stroke="#e6e6e6" stroke-width="0.8"/></svg>
<div style="left:398px;top:300.5px;width:99.5px;height:1px;background:#3e3e40;"></div>
<span style="left:402.5px;top:304.56px;font-size:8px;color:#e6e6e6;transform:scaleX(0.7914);">Operation</span>
<div style="left:432px;top:309.5px;width:55px;height:0.8px;background:#5a5a5c;"></div>
<div style="left:407.3px;top:316.4px;width:79.4px;height:11.4px;background:#4e4e50;border:0.8px solid #68686a;box-sizing:border-box;border-radius:1.5px"></div>
<span style="left:409px;top:317.81px;font-size:7.5px;color:#e6e6e6;transform:scaleX(0.7396);">Operation of transparent part</span>
<svg style="left:480.5px;top:320.5px;" width="5" height="4" viewBox="0 0 5 4"><path d="M0.4 0.6L2.5 3L4.6 0.6" stroke="#d0d0d0" stroke-width="0.8" fill="none"/></svg>
<div style="left:402px;top:331px;width:85px;height:0.8px;background:#5a5a5c;"></div>
<div style="left:407.3px;top:334px;width:79.4px;height:11.4px;background:#4e4e50;border:0.8px solid #68686a;box-sizing:border-box;border-radius:1.5px"></div>
<span style="left:419.2px;top:334.96px;font-size:8px;color:#e6e6e6;transform:scaleX(0.8213);">Selectable object</span>
<svg style="left:479.5px;top:338px;" width="5" height="4" viewBox="0 0 5 4"><path d="M0.4 0.6L2.5 3L4.6 0.6" stroke="#d0d0d0" stroke-width="0.8" fill="none"/></svg>
<div style="left:402px;top:348.7px;width:85px;height:0.8px;background:#5a5a5c;"></div>
<span style="left:407px;top:354.21px;font-size:7.5px;color:#e6e6e6;transform:scaleX(0.6731);">Selection mode</span>
<div style="left:443.5px;top:351.7px;width:43.5px;height:13.6px;background:#4e4e50;border:0.8px solid #68686a;box-sizing:border-box;border-radius:1.5px"></div>
<div style="left:444px;top:352px;width:12.8px;height:13px;background:#7282b4;"></div>
<svg style="left:446.5px;top:354.5px;" width="8" height="8" viewBox="0 0 8 8"><rect x="0.5" y="0.5" width="7" height="7" fill="none" stroke="#d8dcf0" stroke-width="0.8" stroke-dasharray="1 0.7"/><rect x="2" y="2" width="4" height="4" fill="#aab4d8"/></svg>
<svg style="left:458px;top:354px;" width="9" height="9" viewBox="0 0 9 9"><rect x="0.5" y="0.5" width="5.4" height="5.4" fill="#8a8a8c" stroke="#d2d2d2" stroke-width="0.7"/><rect x="3" y="3" width="5.4" height="5.4" fill="#4e4e50" stroke="#d2d2d2" stroke-width="0.7"/><path d="M4.4 5.7H7M5.7 4.4V7" stroke="#d2d2d2" stroke-width="0.7"/></svg>
<svg style="left:468.5px;top:354px;" width="9" height="9" viewBox="0 0 9 9"><rect x="0.5" y="0.5" width="5.4" height="5.4" fill="#8a8a8c" stroke="#d2d2d2" stroke-width="0.7"/><rect x="3" y="3" width="5.4" height="5.4" fill="#4e4e50" stroke="#d2d2d2" stroke-width="0.7"/><path d="M4.4 5.7H7" stroke="#d2d2d2" stroke-width="0.7"/></svg>
<svg style="left:480.5px;top:357px;" width="5" height="4" viewBox="0 0 5 4"><path d="M0.4 0.6L2.5 3L4.6 0.6" stroke="#d0d0d0" stroke-width="0.8" fill="none"/></svg>
<div style="left:398px;top:372.5px;width:99.5px;height:11px;background:#4c4c4e;"></div>
<svg style="left:473.5px;top:373.5px;" width="9" height="9" viewBox="0 0 9 9"><circle cx="4.5" cy="4.5" r="3.8" fill="none" stroke="#d2d2d2" stroke-width="0.8"/><path d="M4.5 1.4V4.5" stroke="#d2d2d2" stroke-width="0.9"/><circle cx="4.5" cy="4.9" r="0.9" fill="#d2d2d2"/></svg>
<svg style="left:485.5px;top:373.5px;" width="9" height="9" viewBox="0 0 9 9"><circle cx="3" cy="3" r="2.2" fill="none" stroke="#d2d2d2" stroke-width="1.1"/><path d="M4.6 4.6L8.2 8.2" stroke="#d2d2d2" stroke-width="1.5"/></svg>
<div style="left:398px;top:383.5px;width:99.5px;height:3px;background:#38383a;"></div>
<div style="left:398px;top:386.5px;width:99.5px;height:10.5px;background:#3e3e40;"></div>
<div style="left:401px;top:389px;width:4px;height:5px;background:#4c4c4e;"></div>
<svg style="left:412.5px;top:389px;" width="10" height="6" viewBox="0 0 10 6"><rect x="0.5" y="0.5" width="9" height="5" rx="0.8" fill="#58585a" stroke="#6a6a6c" stroke-width="0.7"/></svg>
<div style="left:428px;top:387px;width:31.5px;height:10px;background:#464648;"></div>
<svg style="left:430.5px;top:388.5px;" width="8" height="7.5" viewBox="0 0 8 7.5"><rect x="0.4" y="0.4" width="7.2" height="6.7" rx="0.8" fill="#d8d8d8"/><rect x="1.2" y="3.6" width="2.6" height="2.6" fill="#3e3e40"/><rect x="4.4" y="1.2" width="2.4" height="2" fill="#6a6a6c"/><rect x="4.4" y="4" width="2.4" height="2.4" fill="#8a8a8c"/></svg>
<span style="left:443.5px;top:388.21px;font-size:7.5px;color:#c8c8c8;transform:scaleX(0.7333);">Colo</span>
<svg style="left:464px;top:389px;" width="9" height="6.5" viewBox="0 0 9 6.5"><path d="M0.5 1H3.5M5.5 1H8.5M0.5 5.5H3.5M5.5 5.5H8.5M2 1V5.5M7 1V5.5" stroke="#6c6c6e" stroke-width="0.9"/></svg>
<svg style="left:482px;top:389px;" width="10" height="6.5" viewBox="0 0 10 6.5"><path d="M0.5 0.8H9.5M0.5 3.2H9.5M0.5 5.6H9.5M3 0.8V5.6" stroke="#58585a" stroke-width="0.9"/></svg>
<div style="left:398px;top:397px;width:99.5px;height:1px;background:#38383a;"></div>
<div style="left:398.5px;top:398.5px;width:73px;height:6px;background:#565658;border:0.7px solid #6a6a6c;box-sizing:border-box;border-radius:1.5px"></div>
<svg style="left:476px;top:399px;" width="6" height="5" viewBox="0 0 6 5"><circle cx="3" cy="4.4" r="2.6" fill="none" stroke="#d2d2d2" stroke-width="0.8"/></svg>
<svg style="left:486px;top:400px;" width="8" height="4" viewBox="0 0 8 4"><rect x="0.5" y="0.8" width="7" height="5" rx="1" fill="none" stroke="#d2d2d2" stroke-width="0.8"/></svg>
<div style="left:506px;top:30.3px;width:98px;height:11.2px;background:#3c3c3e;"></div>
<svg style="left:509px;top:32.8px;" width="5" height="5" viewBox="0 0 5 5"><path d="M0 0.5H5M0 2.5H5M0 4.5H5" stroke="#6a6a6c" stroke-width="0.8"/></svg>
<div style="left:516.5px;top:30.8px;width:51px;height:10.7px;background:#48484a;"></div>
<svg style="left:521px;top:33px;" width="9" height="8" viewBox="0 0 9 8"><path d="M0.6 7.4V3.4C0.6 1.8 1.6 0.8 2.4 2.4C2.8 0.4 4.6 0.4 4.8 2.4C5.4 0.6 7.2 0.8 7 3C8.2 2.4 8.6 3.8 8.2 5V7.4Z" fill="#c4c4c4"/><path d="M2.6 4V6.6M4.6 4V6.6M6.4 4.4V6.6" stroke="#4a4a4c" stroke-width="0.6"/></svg>
<span style="left:533.6px;top:31.71px;font-size:7.5px;color:#cacaca;transform:scaleX(0.7690);">Color Mixing</span>
<svg style="left:572px;top:33.5px;" width="10" height="7" viewBox="0 0 10 7"><path d="M0.6 6.4C0.6 2.6 2.6 0.6 5 0.6C7.4 0.6 9.4 2.6 9.4 6.4M2.6 6.4C3 4.6 3.8 3.8 5 3.8C6.2 3.8 7 4.6 7.4 6.4" fill="none" stroke="#6a6a6c" stroke-width="0.8"/></svg>
<svg style="left:589.5px;top:32.5px;" width="11" height="9" viewBox="0 0 11 9"><circle cx="5.5" cy="5" r="4.2" fill="none" stroke="#6a6a6c" stroke-width="0.8"/><path d="M5.5 4V7.4M5.5 2.2V3" stroke="#6a6a6c" stroke-width="0.9"/></svg>
<svg style="left:506px;top:43px;" width="94" height="74.2" viewBox="0 0 94 74.2"><defs>
<pattern id="ck" width="6.4" height="6.4" patternUnits="userSpaceOnUse" patternTransform="translate(1.2 1.6)"><rect width="6.4" height="6.4" fill="#f4f4f4"/><rect width="3.2" height="3.2" fill="#c2c2c2"/><rect x="3.2" y="3.2" width="3.2" height="3.2" fill="#c2c2c2"/></pattern>
<linearGradient id="g1" x1="0" x2="94" y1="0" y2="0" gradientUnits="userSpaceOnUse"><stop offset="0" stop-color="#040404"/><stop offset="0.25" stop-color="#0c0c0c"/><stop offset="0.45" stop-color="#272727"/><stop offset="0.65" stop-color="#3c3c3c"/><stop offset="0.85" stop-color="#505050"/><stop offset="1" stop-color="#5a5a5a"/></linearGradient>
<linearGradient id="g2" x1="0" x2="0" y1="20" y2="73" gradientUnits="userSpaceOnUse"><stop offset="0" stop-color="#a8a8a8"/><stop offset="0.5" stop-color="#bababa"/><stop offset="1" stop-color="#cecece"/></linearGradient>
<linearGradient id="g3" x1="0" x2="94" y1="0" y2="0" gradientUnits="userSpaceOnUse"><stop offset="0" stop-color="#c6c6c6"/><stop offset="0.5" stop-color="#e4e4e4"/><stop offset="1" stop-color="#f8f8f8"/></linearGradient>
<linearGradient id="g4" x1="0" x2="94" y1="0" y2="0" gradientUnits="userSpaceOnUse"><stop offset="0.25" stop-color="#8c8c8c"/><stop offset="0.45" stop-color="#787878"/><stop offset="0.62" stop-color="#686868"/><stop offset="0.75" stop-color="#5e5e5e"/><stop offset="1" stop-color="#5a5a5a"/></linearGradient>
<filter id="bl" x="-5%" y="-5%" width="110%" height="110%"><feGaussianBlur stdDeviation="0.55"/></filter>
<clipPath id="mc"><rect x="0" y="0" width="94" height="74.2"/></clipPath>
</defs>
<g clip-path="url(#mc)">
<rect width="94" height="74.2" fill="url(#ck)"/>
<g filter="url(#bl)">
<path d="M-6 -6H100V15L76 13L74.2 11.8L69.2 13.2L63.3 14.8L57.4 12.8L51.4 10.8L43.5 13.2L33.6 13.8L25.7 12.4L19.7 9.3L13.8 9.9L5.9 12.8L0 11.8L-6 12Z" fill="url(#g1)"/>
<path d="M-6 22L0 22L9.8 23L17.8 25.6L23.7 23.4L26 24V49L22.8 49L19 56L13.2 63.4L6 68L-6 80Z" fill="url(#g2)"/>
<path d="M-6 62L13.2 63.4L18.8 66.6L25.2 61L34.8 59.4L42.8 62.6L50.8 68.2L57.2 64.2L65.2 60.2L74.8 62.6L84.4 67.4L90.8 64.2L100 64V82H-6Z" fill="url(#g3)"/>
<path d="M61.3 22.7L65 20L69.2 17.8L73.2 14.8L76 12L100 12V51.6L94 51.4L87.6 50.6L73.2 48.2L62 48.2L58 50V26Z" fill="url(#g4)"/>
<path d="M23.7 24L26.7 19.8L33.6 18.4L45.5 18.8L53.4 19.8L57.4 24.7L62 26V48.2L52.4 53L42.8 55.9L30 53.8L22.8 49Z" fill="url(#g4)"/>
</g>
</g></svg>
<div style="left:508px;top:120.8px;width:14px;height:8px;background:#e6203e;border-radius:2px"></div>
<div style="left:526px;top:120.8px;width:14px;height:8px;background:#f0842c;border-radius:2px"></div>
<div style="left:544px;top:120.8px;width:14px;height:8px;background:#f0e83c;border-radius:2px"></div>
<div style="left:562px;top:120.8px;width:14px;height:8px;background:#3cc63e;border-radius:2px"></div>
<div style="left:580px;top:120.8px;width:14px;height:8px;background:#0a6a78;border-radius:2px"></div>
<div style="left:598px;top:120.8px;width:14px;height:8px;background:#2444e0;border-radius:2px"></div>
<div style="left:506px;top:131.5px;width:98px;height:6.5px;background:#434345;"></div>
<div style="left:512px;top:132px;width:33px;height:5.5px;background:#4e4e50;border-radius:1px"></div>
<svg style="left:507.5px;top:132.5px;" width="3" height="4.5" viewBox="0 0 3 4.5"><path d="M2.4 0.4L0.6 2.2L2.4 4" stroke="#a0a0a2" stroke-width="0.7" fill="none"/></svg>
<div style="left:506px;top:139px;width:94px;height:12.5px;background:#3f3f41;border:0.7px solid #4c4c4e;box-sizing:border-box"></div>
<svg style="left:512.5px;top:142px;" width="8" height="6" viewBox="0 0 8 6"><path d="M2 1.6H5A1.7 1.7 0 0 1 5 5H1.4" fill="none" stroke="#545456" stroke-width="0.8"/><path d="M2.6 0.2L0.6 1.6L2.6 3Z" fill="#545456"/></svg>
<svg style="left:526px;top:142px;" width="8" height="6" viewBox="0 0 8 6"><path d="M6 1.6H3A1.7 1.7 0 0 0 3 5H6.6" fill="none" stroke="#545456" stroke-width="0.8"/><path d="M5.4 0.2L7.4 1.6L5.4 3Z" fill="#545456"/></svg>
<div style="left:540px;top:140px;width:0.8px;height:10.5px;background:#4e4e50;"></div>
<svg style="left:546.5px;top:143.5px;" width="7" height="4" viewBox="0 0 7 4"><path d="M0.4 2.6C1.6 0.4 2.6 0.4 3.5 2C4.4 3.6 5.4 3.6 6.6 1.4" fill="none" stroke="#8a8a8c" stroke-width="0.7"/></svg>
<svg style="left:558.5px;top:140.5px;" width="10" height="10" viewBox="0 0 10 10"><path d="M0.6 9L1.8 6L6.6 0.8L8.2 2.4L3.4 7.6Z" fill="#c8c8c8"/><path d="M6 6.4L8 4.8L9.6 6.8V9.4H6Z" fill="none" stroke="#c8c8c8" stroke-width="0.7"/></svg>
<svg style="left:569.5px;top:139.8px;" width="11" height="11" viewBox="0 0 11 11"><path d="M1 6L5.4 2.4L9.2 5.8L4.8 10.6Z" fill="#dcdcdc" stroke="#dcdcdc" stroke-width="0.8" stroke-linejoin="round"/><path d="M6 1.6L7.6 0.4L10.6 3.2L9.6 4.6Z" fill="#d0d0d0"/><path d="M3.2 6.2L5.2 4.4L7.2 6.4L5.2 8.6Z" fill="#48484a"/></svg>
<svg style="left:581px;top:140.5px;" width="12" height="10" viewBox="0 0 12 10"><path d="M3.8 0.8C5.6 3.4 7 5 7 6.8C7 8.6 5.6 9.6 3.8 9.6C2 9.6 0.6 8.6 0.6 6.8C0.6 5 2 3.4 3.8 0.8Z" fill="#8c8c8e"/><path d="M8.2 0.8C10 3.4 11.4 5 11.4 6.8C11.4 8.6 10 9.6 8.2 9.6C6.4 9.6 5 8.6 5 6.8C5 5 6.4 3.4 8.2 0.8Z" fill="#a2a2a4"/></svg>
<div style="left:592.6px;top:139.7px;width:11.4px;height:11.2px;background:#6e7ca6;"></div>
<svg style="left:593.5px;top:140.5px;" width="6" height="10" viewBox="0 0 6 10"><path d="M0.6 9L5 1.2" stroke="#c4cae0" stroke-width="1.4"/></svg>
<div style="left:506px;top:152px;width:98px;height:1.5px;background:#38383a;"></div>
<div style="left:506px;top:153.5px;width:98px;height:10px;background:#3c3c3e;"></div>
<svg style="left:509px;top:155.8px;" width="5" height="5" viewBox="0 0 5 5"><path d="M0 0.5H5M0 2.5H5M0 4.5H5" stroke="#6a6a6c" stroke-width="0.8"/></svg>
<div style="left:517.4px;top:154px;width:30.2px;height:9.5px;background:#48484a;"></div>
<svg style="left:520.5px;top:155px;" width="8" height="8" viewBox="0 0 8 8"><circle cx="4" cy="4" r="3.5" fill="none" stroke="#d0d0d0" stroke-width="0.8"/><rect x="2.4" y="2.4" width="3.2" height="3.2" fill="#d0d0d0"/></svg>
<span style="left:533.7px;top:154.81px;font-size:7.5px;color:#c8c8c8;transform:scaleX(0.7533);">Colo</span>
<svg style="left:554px;top:155.5px;" width="10" height="7" viewBox="0 0 10 7"><path d="M0.6 6.4C0.6 2.6 2.6 0.6 5 0.6C7.4 0.6 9.4 2.6 9.4 6.4H0.6" fill="none" stroke="#5e5e60" stroke-width="0.8"/></svg>
<svg style="left:572px;top:155.5px;" width="10" height="7" viewBox="0 0 10 7"><path d="M0.6 6.4C0.6 2.6 2.6 0.6 5 0.6C7.4 0.6 9.4 2.6 9.4 6.4H0.6M3 5H7" fill="none" stroke="#5e5e60" stroke-width="0.8"/></svg>
<svg style="left:591px;top:155px;" width="10" height="8" viewBox="0 0 10 8"><circle cx="5.4" cy="3.8" r="3.4" fill="none" stroke="#5e5e60" stroke-width="0.8"/><path d="M2 7.6L3.4 6" stroke="#5e5e60" stroke-width="0.8"/></svg>
<div style="left:516.2px;top:166.2px;width:78.2px;height:78.2px;border-radius:50%;background:conic-gradient(from -60deg,#ff0000,#ffff00,#00ff00,#00ffff,#0000ff,#ff00ff,#ff0000);-webkit-mask:radial-gradient(circle closest-side,transparent 0,transparent 32.1px,#000 32.7px,#000 38.8px,transparent 39.2px);mask:radial-gradient(circle closest-side,transparent 0,transparent 32.1px,#000 32.7px,#000 38.8px,transparent 39.2px)"></div>
<div style="left:534.7px;top:184.8px;width:40.8px;height:40.2px;background:linear-gradient(to top,#000,rgba(0,0,0,0)),linear-gradient(to right,#fff,#e6101c)"></div>
<div style="left:520.2px;top:183.8px;width:6.5px;height:6.5px;background:#e21c1c;border:1.3px solid #ffffff;box-sizing:border-box;border-radius:1.2px;transform:rotate(-28deg)"></div>
<div style="left:531.4px;top:205.8px;width:5.4px;height:5.4px;background:transparent;border:1px solid #d0d0d0;border-radius:50%;box-sizing:border-box"></div>
<div style="left:514.5px;top:236.5px;width:6.5px;height:8px;background:#b2a60f;"></div>
<div style="left:506.2px;top:230.3px;width:9.6px;height:10.2px;background:#626264;border:0.9px solid #8d9cd2;box-sizing:border-box;border-radius:1px"></div>
<div style="left:506px;top:245.2px;width:15.5px;height:6px;background:#2e2e30;border-radius:1px"></div>
<svg style="left:507.5px;top:246.5px;" width="13" height="3.5" viewBox="0 0 13 3.5"><path d="M0.4 1.6C1.8 0.2 3 0.4 4.4 1.6C5.8 2.8 7 2.8 8.4 1.6C9.8 0.4 11 0.4 12.6 1.8" fill="none" stroke="#f2f2f2" stroke-width="1.3"/></svg>
<div style="left:532.2px;top:246.8px;width:4.2px;height:4.2px;background:#d81a1a;border-radius:2px"></div>
<span style="left:539px;top:245.21px;font-size:7.5px;color:#cfcfcf;transform:scaleX(0.7692);">104</span>
<div style="left:550.7px;top:246.8px;width:4.2px;height:4.2px;background:#18b818;border-radius:2px"></div>
<span style="left:557px;top:245.21px;font-size:7.5px;color:#cfcfcf;transform:scaleX(0.7692);">104</span>
<div style="left:569.9000000000001px;top:246.8px;width:4.2px;height:4.2px;background:#2030e0;border-radius:2px"></div>
<span style="left:576px;top:245.21px;font-size:7.5px;color:#cfcfcf;transform:scaleX(0.7692);">104</span>
<svg style="left:592px;top:243.5px;" width="9" height="9" viewBox="0 0 9 9"><circle cx="4.5" cy="4.5" r="3.8" fill="none" stroke="#c8c8c8" stroke-width="0.8"/><path d="M3.4 2.6L6.4 4.5L3.4 6.4Z" fill="none" stroke="#c8c8c8" stroke-width="0.7"/></svg>
<div style="left:506px;top:254.5px;width:98px;height:2px;background:#38383a;"></div>
<div style="left:506px;top:256.5px;width:98px;height:10.5px;background:#3c3c3e;"></div>
<svg style="left:509px;top:258.5px;" width="5" height="5" viewBox="0 0 5 5"><path d="M0 0.5H5M0 2.5H5M0 4.5H5" stroke="#6a6a6c" stroke-width="0.8"/></svg>
<div style="left:516.8px;top:257px;width:32.8px;height:10px;background:#48484a;"></div>
<svg style="left:521px;top:258px;" width="8.5" height="8.5" viewBox="0 0 8.5 8.5"><path d="M0.8 2.4L4.2 0.6L7.6 2.4V6L4.2 7.8L0.8 6Z" fill="none" stroke="#d0d0d0" stroke-width="0.8"/><path d="M0.8 4.2L4.2 6L7.6 4.2" fill="none" stroke="#d0d0d0" stroke-width="0.7"/></svg>
<span style="left:533.7px;top:258.21px;font-size:7.5px;color:#d8d8d8;transform:scaleX(0.7000);">Layer</span>
<div style="left:550.5px;top:257.5px;width:16px;height:9.5px;background:#454547;"></div>
<svg style="left:554px;top:259px;" width="9" height="6.5" viewBox="0 0 9 6.5"><path d="M0.5 0.8H8.5M2.5 3.2H8.5M0.5 5.6H8.5" stroke="#626264" stroke-width="0.9"/></svg>
<div style="left:568px;top:257.5px;width:17px;height:9.5px;background:#454547;"></div>
<svg style="left:572px;top:259px;" width="9" height="6.5" viewBox="0 0 9 6.5"><path d="M0.5 6.2V2.6L4.5 0.6L8.5 2.6V6.2M3 6.2V3.6H6V6.2" fill="none" stroke="#5c5c5e" stroke-width="0.9"/></svg>
<div style="left:507px;top:268.3px;width:22.7px;height:11.4px;background:#565658;border:0.7px solid #626264;box-sizing:border-box;border-radius:1.5px"></div>
<div style="left:509px;top:270.2px;width:9px;height:7.6px;background:#545456;border:0.8px solid #808082;box-sizing:border-box"></div>
<svg style="left:522px;top:272.5px;" width="5" height="4" viewBox="0 0 5 4"><path d="M0.4 0.6L2.5 3L4.6 0.6" stroke="#a0a0a2" stroke-width="0.8" fill="none"/></svg>
<div style="left:531.7px;top:268.3px;width:22.8px;height:11.4px;background:#565658;border:0.7px solid #626264;box-sizing:border-box;border-radius:1.5px"></div>
<span style="left:533.5px;top:270.01px;font-size:7.5px;color:#858588;transform:scaleX(0.7917);">Nor</span>
<svg style="left:547.5px;top:272.5px;" width="5" height="4" viewBox="0 0 5 4"><path d="M0.4 0.6L2.5 3L4.6 0.6" stroke="#a0a0a2" stroke-width="0.8" fill="none"/></svg>
<div style="left:558.4px;top:270.6px;width:23.8px;height:6.7px;background:#dadada;border:0.7px solid #8a8a8c;box-sizing:border-box"></div>
<div style="left:582.4px;top:269px;width:1.2px;height:10px;background:#6a6a6c;"></div>
<span style="left:586.5px;top:270.21px;font-size:7.5px;color:#d8d8d8;transform:scaleX(0.7308);">100</span>
<svg style="left:597.5px;top:270px;" width="3" height="8" viewBox="0 0 3 8"><path d="M2.6 0.6L0.6 2.6M2.6 7.4L0.6 5.4" stroke="#b0b0b0" stroke-width="0.7" fill="none"/></svg>
<svg style="left:507.29999999999995px;top:281.5px;" width="10" height="10" viewBox="0 0 10 10"><rect x="0.6" y="0.6" width="6.4" height="6.4" rx="1" fill="none" stroke="#c2c2c2" stroke-width="0.8"/><rect x="3" y="3" width="6.4" height="6.4" rx="0.6" fill="#c2c2c2"/></svg>
<svg style="left:518.8px;top:281.5px;" width="10" height="10" viewBox="0 0 10 10"><path d="M0.6 1H9.4M5 1V9.4M2.6 3.4H7.4M2.6 5.6H7.4M3 9.4H7" stroke="#c2c2c2" stroke-width="0.9" fill="none"/></svg>
<svg style="left:530.2px;top:281.5px;" width="10" height="10" viewBox="0 0 10 10"><path d="M1.4 0.8H5.6V6H1.4Z" fill="#c2c2c2"/><path d="M6 5L9.4 8L7.8 8.2L8.6 9.8L7.8 10L7 8.6L6 9.4Z" fill="#c2c2c2"/></svg>
<svg style="left:542.1px;top:281.5px;" width="10" height="10" viewBox="0 0 10 10"><rect x="1.6" y="4.4" width="6.8" height="5" fill="#c2c2c2"/><path d="M3 4.4V2.8A2 2 0 0 1 7 2.8V4.4" fill="none" stroke="#c2c2c2" stroke-width="0.9"/></svg>
<svg style="left:554.4px;top:281.5px;" width="10" height="10" viewBox="0 0 10 10"><rect x="0.6" y="4.6" width="4.6" height="4.6" fill="#c2c2c2"/><path d="M5 0.8L9.2 3.6L6 4.6Z" fill="#c2c2c2"/><path d="M5.2 5L9 8.8M7.6 6.4L9.4 5.4" stroke="#c2c2c2" stroke-width="0.8"/></svg>
<svg style="left:568.3px;top:281.5px;" width="12" height="10" viewBox="0 0 12 10"><rect x="0.6" y="1.6" width="7" height="7" fill="#535355" stroke="#68686a" stroke-width="0.8"/><path d="M8.4 3.4L9.6 4.8L10.8 3.4" stroke="#68686a" stroke-width="0.7" fill="none"/></svg>
<svg style="left:587.0px;top:281.5px;" width="12" height="10" viewBox="0 0 12 10"><rect x="0.6" y="1.6" width="7" height="7" fill="#505052" stroke="#626264" stroke-width="0.8"/><path d="M0.6 8.6L7.6 1.6" stroke="#626264" stroke-width="0.7"/><path d="M8.4 3.4L9.6 4.8L10.8 3.4" stroke="#626264" stroke-width="0.7" fill="none"/></svg>
<svg style="left:509.9px;top:294.4px;" width="10" height="10" viewBox="0 0 10 10"><rect x="0.8" y="0.8" width="7.6" height="7.6" rx="1" fill="none" stroke="#c2c2c2" stroke-width="0.9"/><circle cx="8" cy="8" r="1.8" fill="#4a4a4c" stroke="#c2c2c2" stroke-width="0.7"/></svg>
<svg style="left:522.3px;top:294.4px;" width="10" height="10" viewBox="0 0 10 10"><rect x="0.8" y="0.8" width="7.6" height="7.6" rx="1" fill="none" stroke="#c2c2c2" stroke-width="0.9"/><rect x="2.6" y="2.6" width="4" height="4" fill="none" stroke="#c2c2c2" stroke-width="0.7"/><circle cx="8" cy="8" r="1.8" fill="#4a4a4c" stroke="#c2c2c2" stroke-width="0.7"/></svg>
<svg style="left:533.6px;top:294.4px;" width="10" height="10" viewBox="0 0 10 10"><path d="M0.6 8V1H3.6L4.4 2.2H9V8Z" fill="#c2c2c2"/><circle cx="8.4" cy="8.2" r="1.8" fill="#4a4a4c" stroke="#c2c2c2" stroke-width="0.7"/></svg>
<svg style="left:546.9px;top:294.4px;" width="10" height="10" viewBox="0 0 10 10"><path d="M3 1H6V5H3ZM2 7L4.5 9.4L7 7Z" fill="#58585a"/></svg>
<svg style="left:557.4px;top:294.4px;" width="10" height="10" viewBox="0 0 10 10"><rect x="3.4" y="0.6" width="6" height="5.4" rx="0.8" fill="none" stroke="#c2c2c2" stroke-width="0.8"/><rect x="0.6" y="4" width="5.6" height="5.4" rx="0.8" fill="#4a4a4c" stroke="#c2c2c2" stroke-width="0.8"/></svg>
<svg style="left:569.9px;top:294.4px;" width="10" height="10" viewBox="0 0 10 10"><rect x="0.6" y="0.6" width="8.8" height="8.8" rx="1.4" fill="#c2c2c2"/><circle cx="5" cy="5" r="2.4" fill="#3e3e40"/></svg>
<svg style="left:582.0px;top:294.4px;" width="10" height="10" viewBox="0 0 10 10"><rect x="0.6" y="3" width="5" height="5" fill="none" stroke="#5e5e60" stroke-width="0.8"/><rect x="4.4" y="4.4" width="5" height="5" fill="#58585a"/></svg>
<svg style="left:593.6px;top:294.4px;" width="8" height="10" viewBox="0 0 8 10"><path d="M0.4 2H7M2.6 2V0.8H4.8V2" fill="none" stroke="#c2c2c2" stroke-width="0.8"/><path d="M1.2 3.2H6.2L5.8 9.4H1.6Z" fill="none" stroke="#c2c2c2" stroke-width="0.8"/></svg>
<div style="left:506px;top:307px;width:98px;height:101px;background:#39393b;"></div>
<div style="left:506px;top:307.8px;width:98px;height:17px;background:#3e3e40;"></div>
<div style="left:506px;top:326.6px;width:98px;height:16.2px;background:#3e3e40;"></div>
<div style="left:529.3px;top:307.8px;width:67.7px;height:17px;background:linear-gradient(90deg,#5f6d94,#55628a)"></div>
<div style="left:518px;top:307.8px;width:0.8px;height:35px;background:#343436;"></div>
<div style="left:529px;top:326.6px;width:0.8px;height:16.2px;background:#343436;"></div>
<svg style="left:507.3px;top:313px;" width="9" height="6" viewBox="0 0 9 6"><path d="M0.4 3C2 0.6 7 0.6 8.6 3C7 5.4 2 5.4 0.4 3Z" fill="none" stroke="#d8d8d8" stroke-width="0.8"/><circle cx="4.5" cy="3" r="1.5" fill="#d8d8d8"/></svg>
<svg style="left:507.3px;top:331.5px;" width="9" height="6" viewBox="0 0 9 6"><path d="M0.4 3C2 0.6 7 0.6 8.6 3C7 5.4 2 5.4 0.4 3Z" fill="none" stroke="#d8d8d8" stroke-width="0.8"/><circle cx="4.5" cy="3" r="1.5" fill="#d8d8d8"/></svg>
<svg style="left:519.5px;top:311.5px;" width="8" height="9" viewBox="0 0 8 9"><path d="M1.2 6.6L6.2 0.8L7.2 1.6L2.4 7.4Z" fill="#d8d8d8"/><path d="M0.4 8.4H7.6" stroke="#d8d8d8" stroke-width="0.8"/></svg>
<div style="left:520.5px;top:330px;width:6px;height:9px;background:#404042;border-radius:1px"></div>
<div style="left:532.7px;top:310px;width:16.8px;height:12.3px;border:1px solid #e4e6ee;box-sizing:border-box;border-radius:1px;box-shadow:0 0 0 0.8px #2c2c2e;background-color:#fafafa;background-image:conic-gradient(#c8c8c8 25%,#fafafa 0 50%,#c8c8c8 0 75%,#fafafa 0);background-size:4px 4px"></div>
<span style="left:554.5px;top:308.81px;font-size:7.5px;color:#d6dcf0;transform:scaleX(0.7958);">100 % Normal</span>
<span style="left:554.5px;top:315.81px;font-size:7.5px;color:#d6dcf0;transform:scaleX(0.7920);">Layer 1</span>
<div style="left:532.7px;top:328.6px;width:16.8px;height:12.6px;background:#fdfdfd;border:0.8px solid #d8d8d8;box-sizing:border-box;border-radius:1px"></div>
<svg style="left:557.4px;top:328px;" width="10" height="10.5" viewBox="0 0 10 10.5"><rect x="0.4" y="0.4" width="9.2" height="9.7" rx="1" fill="#f4f4f4"/><path d="M2.8 2.4H7.4V6.4L5.8 8H2.8Z" fill="none" stroke="#2e2e30" stroke-width="0.9"/></svg>
<span style="left:569.3px;top:333.01px;font-size:7.5px;color:#d4d4d4;transform:scaleX(0.8700);">Paper</span>
</div></div></body></html>
